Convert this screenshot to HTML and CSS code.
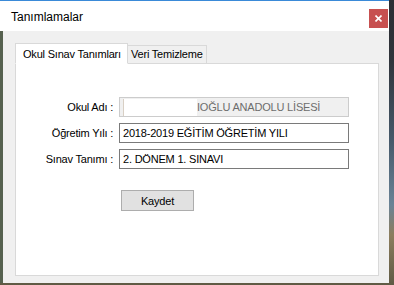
FILE: index.html
```html
<!DOCTYPE html>
<html lang="tr">
<head>
  <meta charset="UTF-8">
  <meta name="viewport" content="width=device-width, initial-scale=1.0">
  <title>Tanımlamalar</title>
  <link rel="stylesheet" href="styles.css">
</head>
<body>
  <div class="window">
    <!-- Başlık çubuğu -->
    <div class="titlebar">
      <span class="title">Tanımlamalar</span>
      <button class="close">
        <svg width="7" height="7" viewBox="0 0 7 7"><path d="M0.5 0.5L6.5 6.5M6.5 0.5L0.5 6.5" stroke="#fff" stroke-width="1.6"/></svg>
      </button>
    </div>

    <div class="content">
      <!-- Sekmeler -->
      <div class="tabs">
        <div class="tab active">Okul Sınav Tanımları</div>
        <div class="tab">Veri Temizleme</div>
      </div>

      <div class="tab-page">
        <div class="form-row">
          <label class="form-label">Okul Adı :</label>
          <div class="field disabled"><span class="redact"></span>IOĞLU ANADOLU LİSESİ</div>
        </div>
        <div class="form-row">
          <label class="form-label">Öğretim Yılı :</label>
          <div class="field">2018-2019 EĞİTİM ÖĞRETİM YILI</div>
        </div>
        <div class="form-row">
          <label class="form-label">Sınav Tanımı :</label>
          <div class="field">2. DÖNEM 1. SINAVI</div>
        </div>
        <div class="actions">
          <button class="save">Kaydet</button>
        </div>
      </div>
    </div>
  </div>
</body>
</html>
```

FILE: styles.css
```css
body {
  margin: 0;
  width: 394px;
  height: 285px;
  overflow: hidden;
  font-family: "Liberation Sans", Arial, sans-serif;
  font-size: 11px;
  letter-spacing: -0.2px;
  color: #000;
  background: linear-gradient(180deg, #2c2e34 0, #30343b 60px, #46596a 140px, #6a8396 205px, #8c7d5d 235px, #5f5a44 285px);
}

.window {
  width: 389px;
  height: 283px;
  display: flex;
  flex-direction: column;
}

.titlebar {
  height: 30px;
  border-top: 1px solid #3a8ad8;
  background-color: #fff;
  display: flex;
  justify-content: space-between;
  padding-left: 11px;
}

.title {
  font-size: 12px;
  letter-spacing: 0;
  line-height: 30px;
  padding-top: 1px;
}

.close {
  width: 19px;
  height: 19px;
  margin-top: 8px;
  margin-right: 1px;
  padding: 0;
  border: none;
  background-color: #c75050;
  display: flex;
  align-items: center;
  justify-content: center;
}

.content {
  flex: 1;
  background-color: #f0f0f0;
  border-left: 3px solid #56614f;
  padding: 12px 10px 7px 12px;
  display: flex;
  flex-direction: column;
}

.tabs {
  display: flex;
  align-items: flex-end;
  margin-bottom: -1px;
  position: relative;
  z-index: 1;
}

.tab {
  box-sizing: border-box;
  height: 19px;
  width: 79px;
  padding-left: 3px;
  line-height: 17px;
  border: 1px solid #d9d9d9;
  border-left: none;
  border-bottom: 1px solid #d9d9d9;
  background-color: #f0f0f0;
  white-space: nowrap;
  overflow: hidden;
}

.tab.active {
  height: 21px;
  width: 113px;
  padding-left: 7px;
  line-height: 21px;
  border-left: 1px solid #d9d9d9;
  border-bottom-color: #fff;
  background-color: #fff;
}

.tab-page {
  flex: 1;
  background-color: #fff;
  border: 1px solid #d9d9d9;
  padding-top: 33px;
  display: flex;
  flex-direction: column;
  gap: 6px;
}

.form-row {
  display: flex;
  align-items: center;
  gap: 6px;
}

.form-label {
  width: 97px;
  text-align: right;
  white-space: nowrap;
}

.field {
  box-sizing: border-box;
  width: 230px;
  height: 20px;
  line-height: 18px;
  padding-left: 3px;
  border: 1px solid #7a7a7a;
  background-color: #fff;
  white-space: nowrap;
  display: flex;
  align-items: center;
}

.field.disabled {
  border-color: #cccccc;
  background-color: #f0f0f0;
  color: #6d6d6d;
}

.redact {
  display: inline-block;
  width: 73px;
  height: 17px;
  background-color: #fff;
  border-left: 1px solid #d8cfc4;
}

.actions {
  padding-left: 105px;
  margin-top: 15px;
}

.save {
  width: 73px;
  height: 21px;
  padding: 0;
  border: 1px solid #adadad;
  background-color: #e1e1e1;
  font-family: "Liberation Sans", Arial, sans-serif;
  font-size: 11px;
  letter-spacing: -0.2px;
  color: #000;
}
```
